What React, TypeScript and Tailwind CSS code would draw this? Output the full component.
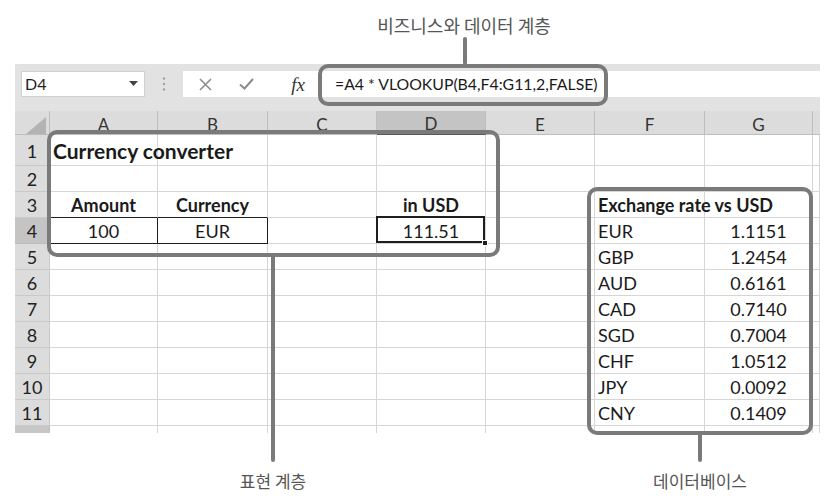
import React from "react";

const letters = ["A", "B", "C", "D", "E", "F", "G"];
const rates: [string, string][] = [
  ["EUR", "1.1151"],
  ["GBP", "1.2454"],
  ["AUD", "0.6161"],
  ["CAD", "0.7140"],
  ["SGD", "0.7004"],
  ["CHF", "1.0512"],
  ["JPY", "0.0092"],
  ["CNY", "0.1409"],
];

function Body({ r, c }: { r: number; c: number }) {
  const base = "bg-white border-r border-b border-[#d6d6d6] flex items-center pt-[2px] whitespace-nowrap text-[18px]";
  const black4 = "bg-white border-r border-b border-[#1e1e1e] flex items-center justify-center pt-[2px] whitespace-nowrap text-[18px]";
  const black3 = "bg-white border-r border-b border-r-[#d6d6d6] border-b-[#1e1e1e] flex items-center justify-center pt-[2px] whitespace-nowrap text-[18px]";

  if (r === 1 && c === 0) {
    return (
      <div className={base + " pl-[3px]"}>
        <span className="relative z-[1] font-bold text-[21px]">Currency converter</span>
      </div>
    );
  }
  if (r === 3 && c === 0) return <div className={black3 + " font-bold"}>Amount</div>;
  if (r === 3 && c === 1) return <div className={black3 + " font-bold"}>Currency</div>;
  if (r === 3 && c === 3) return <div className={base + " justify-center font-bold"}>in USD</div>;
  if (r === 3 && c === 5) {
    return (
      <div className={base + " pl-[3px]"}>
        <span className="relative z-[1] font-bold">Exchange rate vs USD</span>
      </div>
    );
  }
  if (r === 4 && c === 0) return <div className={black4}>100</div>;
  if (r === 4 && c === 1) return <div className={black4}>EUR</div>;
  if (r === 4 && c === 3) {
    return (
      <div className={base + " justify-center relative"}>
        <div className="absolute -left-[1px] -top-[2px] right-0 bottom-0 border-2 border-[#1e1e1e]" />
        <div className="absolute -right-[3px] -bottom-[3px] w-[6px] h-[6px] bg-[#1e1e1e] border border-white z-[2]" />
        <span>111.51</span>
      </div>
    );
  }
  if (r >= 4 && r <= 11 && c === 5) return <div className={base + " pl-[3px]"}>{rates[r - 4][0]}</div>;
  if (r >= 4 && r <= 11 && c === 6) return <div className={base + " justify-center"}>{rates[r - 4][1]}</div>;
  return <div className={base} />;
}

export default function App() {
  const rows = Array.from({ length: 11 }, (_, i) => i + 1);
  return (
    <div className="relative w-[835px] h-[503px] bg-white overflow-hidden font-['Lato',sans-serif] text-[#1a1a1a]">
      {/* top label */}
      <div className="h-[64px] flex">
        <div className="ml-[314px] w-[300px] pt-[12px] text-center text-[18px] leading-[26px] text-[#555] font-['Noto_Sans_CJK_KR',sans-serif]">
          비즈니스와 데이터 계층
        </div>
      </div>

      {/* spreadsheet */}
      <div className="ml-[15px] w-[805px] bg-[#e2e2e2]">
        {/* formula bar */}
        <div className="h-[33px] pt-[7px]">
          <div className="h-[26px] flex">
            <div className="ml-[6px] w-[124px] bg-white border border-[#cfcfcf] flex items-center justify-between pl-[3px] pr-[6px] text-[16px] text-[#222]">
              <span>D4</span>
              <svg width="9" height="6" viewBox="0 0 9 6">
                <path d="M0 0 L9 0 L4.5 5 Z" fill="#444" />
              </svg>
            </div>
            <div className="w-[38px] flex items-center justify-center">
              <svg width="4" height="16" viewBox="0 0 4 16">
                <circle cx="2" cy="2.5" r="1.2" fill="#a0a0a0" />
                <circle cx="2" cy="8" r="1.2" fill="#a0a0a0" />
                <circle cx="2" cy="13.5" r="1.2" fill="#a0a0a0" />
              </svg>
            </div>
            <div className="flex-1 bg-white flex items-center">
              <div className="ml-[16px] w-[13px] flex items-center justify-center">
                <svg width="13" height="13" viewBox="0 0 13 13">
                  <path d="M1 1 L12 12 M12 1 L1 12" stroke="#8c8c8c" strokeWidth="1.6" />
                </svg>
              </div>
              <div className="ml-[27px] w-[15px] flex items-center justify-center">
                <svg width="15" height="12" viewBox="0 0 15 12">
                  <path d="M1 6.5 L5.5 10.5 L14 1" stroke="#8c8c8c" strokeWidth="2" fill="none" />
                </svg>
              </div>
              <div className="ml-[33px] w-[22px] text-center font-['Liberation_Serif',serif] italic text-[19px] leading-none text-[#333]">
                fx
              </div>
              <div className="ml-[26px] text-[15.8px] text-[#1a1a1a] whitespace-nowrap">
                =A4 * VLOOKUP(B4,F4:G11,2,FALSE)
              </div>
            </div>
          </div>
        </div>
        <div className="h-[14px]" />

        {/* grid */}
        <div className="grid grid-cols-[35px_108px_110px_109px_109px_109px_110px_108px_7px] grid-rows-[24px_31px_repeat(10,26px)_7px]">
          <div className="bg-[#dcdcdc] border-r border-b border-[#bdbdbd] flex items-end justify-end pr-[3px]">
            <svg width="20" height="17" viewBox="0 0 20 17">
              <path d="M20 0 L20 17 L0 17 Z" fill="#b3b3b3" />
            </svg>
          </div>
          {letters.map((l) => (
            <div
              key={l}
              className={
                l === "D"
                  ? "bg-[#c4c4c4] border-r border-[#bdbdbd] border-b-2 border-b-[#5a5a5a] flex items-center justify-center pt-[4px] text-[17px] text-[#333]"
                  : "bg-[#dcdcdc] border-r border-b border-[#bdbdbd] flex items-center justify-center pt-[4px] text-[17px] text-[#333]"
              }
            >
              {l}
            </div>
          ))}
          <div className="bg-[#dcdcdc] border-b border-[#bdbdbd]" />

          {rows.map((r) => (
            <React.Fragment key={r}>
              <div
                className={
                  r === 4
                    ? "bg-[#c4c4c4] border-r border-b border-[#bdbdbd] flex items-center justify-center pt-[2px] text-[18px] text-[#222]"
                    : "bg-[#dcdcdc] border-r border-b border-[#c9c9c9] flex items-center justify-center pt-[2px] text-[18px] text-[#222]"
                }
              >
                {r}
              </div>
              {Array.from({ length: 8 }, (_, c) => (
                <Body key={c} r={r} c={c} />
              ))}
            </React.Fragment>
          ))}
          <div className="bg-[#c8c8c8] border-r border-[#bdbdbd]" />
          {Array.from({ length: 8 }, (_, c) => (
            <div key={c} className="bg-white border-r border-[#d6d6d6]" />
          ))}
        </div>
      </div>

      {/* bottom labels */}
      <div className="flex pt-[35px] text-[17px] leading-[26px] text-[#555] font-['Noto_Sans_CJK_KR',sans-serif]">
        <div className="ml-[173px] w-[200px] text-center">표현 계층</div>
        <div className="ml-[227px] w-[200px] text-center">데이터베이스</div>
      </div>

      {/* callout outlines and connectors */}
      <div className="absolute left-[318px] top-[64px] w-[290px] h-[42px] border-4 border-[#7a7a7a] rounded-[10px]" />
      <div className="absolute left-[47px] top-[130px] w-[453px] h-[127px] border-4 border-[#7a7a7a] rounded-[10px]" />
      <div className="absolute left-[587px] top-[187px] w-[226px] h-[248px] border-4 border-[#7a7a7a] rounded-[10px]" />
      <div className="absolute left-[463px] top-[37px] w-[4px] h-[28px] bg-[#7a7a7a] rounded-full" />
      <div className="absolute left-[271px] top-[255px] w-[4px] h-[207px] bg-[#7a7a7a] rounded-full" />
      <div className="absolute left-[698px] top-[433px] w-[4px] h-[29px] bg-[#7a7a7a] rounded-full" />
    </div>
  );
}
